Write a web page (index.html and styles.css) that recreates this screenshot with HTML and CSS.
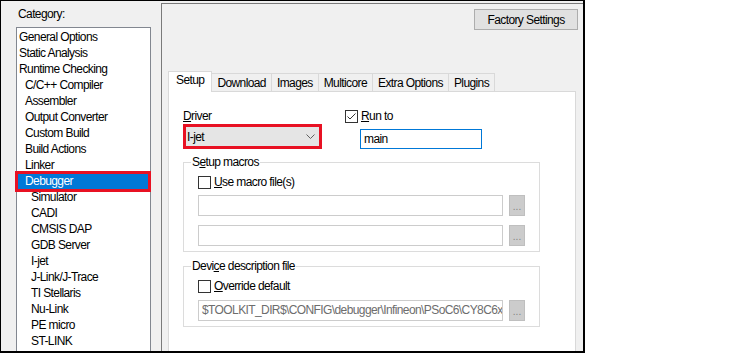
FILE: index.html
```html
<!DOCTYPE html>
<html lang="en">
<head>
    <meta charset="UTF-8">
    <title>Options - Debugger</title>
    <link rel="stylesheet" href="styles.css">
</head>
<body>
    <div class="dialog">
        <!-- Category tree -->
        <div class="category">
            <div class="category-label">Category:</div>
            <ul class="category-list">
                <li class="lvl0">General Options</li>
                <li class="lvl0">Static Analysis</li>
                <li class="lvl0">Runtime Checking</li>
                <li class="lvl1">C/C++ Compiler</li>
                <li class="lvl1">Assembler</li>
                <li class="lvl1">Output Converter</li>
                <li class="lvl1">Custom Build</li>
                <li class="lvl1">Build Actions</li>
                <li class="lvl1">Linker</li>
                <li class="lvl1 selected marked">Debugger</li>
                <li class="lvl2">Simulator</li>
                <li class="lvl2">CADI</li>
                <li class="lvl2">CMSIS DAP</li>
                <li class="lvl2">GDB Server</li>
                <li class="lvl2">I-jet</li>
                <li class="lvl2">J-Link/J-Trace</li>
                <li class="lvl2">TI Stellaris</li>
                <li class="lvl2">Nu-Link</li>
                <li class="lvl2">PE micro</li>
                <li class="lvl2">ST-LINK</li>
            </ul>
        </div>

        <!-- Options panel -->
        <div class="options">
            <div class="options-top">
                <button type="button" class="factory-btn">Factory Settings</button>
            </div>
            <div class="tabs">
                <div class="tab-strip">
                    <span class="tab active">Setup</span>
                    <span class="tab">Download</span>
                    <span class="tab">Images</span>
                    <span class="tab">Multicore</span>
                    <span class="tab">Extra Options</span>
                    <span class="tab">Plugins</span>
                </div>
                <div class="tab-page">
                    <div class="driver-row">
                        <div class="driver-col">
                            <div class="field-label"><u>D</u>river</div>
                            <div class="combo marked">
                                <span>I-jet</span>
                                <svg width="9" height="5" viewBox="0 0 9 5"><polyline points="0.5,0.5 4.5,4.5 8.5,0.5" fill="none" stroke="#606060" stroke-width="1"/></svg>
                            </div>
                        </div>
                        <div class="runto-col">
                            <div class="check-row">
                                <span class="checkbox">
                                    <svg width="11" height="11" viewBox="0 0 11 11"><polyline points="1.5,5.5 4,8 9.5,2.5" fill="none" stroke="#333" stroke-width="1"/></svg>
                                </span>
                                <span><u>R</u>un to</span>
                            </div>
                            <div class="text-input focused">main</div>
                        </div>
                    </div>

                    <fieldset class="group">
                        <legend>S<u>e</u>tup macros</legend>
                        <div class="check-row">
                            <span class="checkbox"></span>
                            <span><u>U</u>se macro file(s)</span>
                        </div>
                        <div class="path-row">
                            <div class="path-input"></div>
                            <span class="browse-btn">...</span>
                        </div>
                        <div class="path-row second">
                            <div class="path-input"></div>
                            <span class="browse-btn">...</span>
                        </div>
                    </fieldset>

                    <fieldset class="group device">
                        <legend>Devi<u>c</u>e description file</legend>
                        <div class="check-row">
                            <span class="checkbox"></span>
                            <span><u>O</u>verride default</span>
                        </div>
                        <div class="path-row">
                            <div class="path-input">$TOOLKIT_DIR$\CONFIG\debugger\Infineon\PSoC6\CY8C6xxA_CM4.ddf</div>
                            <span class="browse-btn">...</span>
                        </div>
                    </fieldset>
                </div>
            </div>
        </div>
    </div>
</body>
</html>
```

FILE: styles.css
```css
body {
    margin: 0;
    background: #fff;
    font-family: "Liberation Sans", Arial, sans-serif;
    font-size: 12px;
    letter-spacing: -0.6px;
    color: #000;
}
.dialog {
    display: flex;
    width: 585px;
    height: 353px;
    box-sizing: border-box;
    border-style: solid;
    border-color: #000;
    border-width: 1px 2px 2px 1px;
    background: #f0f0f0;
    overflow: hidden;
}

/* category tree */
.category {
    width: 160px;
    flex-shrink: 0;
    padding: 5px 0 0 15px;
    box-sizing: border-box;
    display: flex;
    flex-direction: column;
}
.category-label {
    line-height: 16px;
    padding-left: 2px;
    margin-bottom: 5px;
}
.category-list {
    list-style: none;
    margin: 0 0 -6px 0;
    padding: 1px 0 0 0;
    width: 135px;
    box-sizing: border-box;
    flex: 1;
    background: #fff;
    border: 1px solid #828790;
}
.category-list li {
    height: 16px;
    line-height: 16px;
    white-space: nowrap;
}
.lvl0 { padding-left: 2px; }
.lvl1 { padding-left: 8px; }
.lvl2 { padding-left: 14px; }
.category-list li.selected {
    background: #0078d7;
    color: #fff;
}
.category-list li.marked {
    position: relative;
}
.category-list li.marked::after {
    content: "";
    position: absolute;
    left: -2px;
    right: -1px;
    top: -2px;
    bottom: -3px;
    border: 3px solid #e81123;
}

/* options panel */
.options {
    flex: 1;
    min-width: 0;
    margin-top: 2px;
    border-left: 1px solid #7a7a7a;
    border-top: 1px solid #7a7a7a;
    display: flex;
    flex-direction: column;
}
.options-top {
    display: flex;
    justify-content: flex-end;
    padding: 5px 5px 0 0;
}
.factory-btn {
    width: 104px;
    height: 21px;
    padding: 0;
    background: #e1e1e1;
    border: 1px solid #adadad;
    font: inherit;
    letter-spacing: inherit;
    color: #000;
}
.tabs {
    flex: 1;
    margin: 41px 7px 0 6px;
    display: flex;
    flex-direction: column;
}
.tab-strip {
    display: flex;
    align-items: flex-end;
}
.tab {
    line-height: 16px;
    padding: 1px 5px 0;
    margin-left: -1px;
    border: 1px solid #d9d9d9;
    border-bottom: none;
    background: #f0f0f0;
}
.tab.active {
    position: relative;
    z-index: 1;
    margin-left: 0;
    margin-bottom: -1px;
    padding: 0 7px 4px;
    background: #fff;
}
.tab.active + .tab {
    margin-left: 0;
    border-left: none;
}
.tab-page {
    flex: 1;
    margin-bottom: -6px;
    background: #fff;
    border: 1px solid #d9d9d9;
    padding: 16px 0 0 14px;
}

/* driver / run to */
.driver-row {
    display: flex;
    gap: 24px;
}
.driver-col {
    width: 138px;
}
.field-label {
    line-height: 16px;
}
.combo {
    margin: 1px 0 0 1px;
    width: 137px;
    height: 23px;
    box-sizing: border-box;
    border: 1px solid #adadad;
    background: #e5e5e5;
    display: flex;
    align-items: center;
    justify-content: space-between;
    padding: 0 5px 0 2px;
}
.combo.marked {
    position: relative;
}
.combo.marked::after {
    content: "";
    position: absolute;
    inset: -2px;
    border: 3px solid #e81123;
}
.check-row {
    display: flex;
    align-items: center;
    gap: 3px;
    line-height: 16px;
}
.checkbox {
    width: 13px;
    height: 13px;
    box-sizing: border-box;
    border: 1px solid #333;
    background: #fff;
    display: flex;
}
.text-input {
    margin: 5px 0 0 15px;
    width: 122px;
    height: 20px;
    box-sizing: border-box;
    line-height: 18px;
    padding: 0 3px;
    background: #fff;
    border: 1px solid #ababab;
}
.text-input.focused {
    border-color: #0078d7;
}

/* group boxes */
.group {
    margin: 5px 0 0 0;
    width: 357px;
    min-width: 0;
    box-sizing: border-box;
    border: 1px solid #dcdcdc;
    padding: 4px 14px 5px;
}
.group.device {
    margin-top: 6px;
}
.group legend {
    line-height: 16px;
    padding: 0 1px;
    margin-left: -7px;
}
.path-row {
    display: flex;
    gap: 6px;
    margin-top: 5px;
}
.path-row.second {
    margin-top: 9px;
}
.device .path-row {
    margin-top: 6px;
}
.path-input {
    flex: 1;
    min-width: 0;
    height: 21px;
    box-sizing: border-box;
    border: 1px solid #cccccc;
    background: #fff;
    line-height: 19px;
    padding: 0 3px;
    color: #6d6d6d;
    white-space: nowrap;
    overflow: hidden;
}
.browse-btn {
    width: 16px;
    height: 21px;
    box-sizing: border-box;
    border: 1px solid #bfbfbf;
    background: #cccccc;
    color: #838383;
    font-size: 10px;
    letter-spacing: 0;
    line-height: 22px;
    text-align: center;
}
```
